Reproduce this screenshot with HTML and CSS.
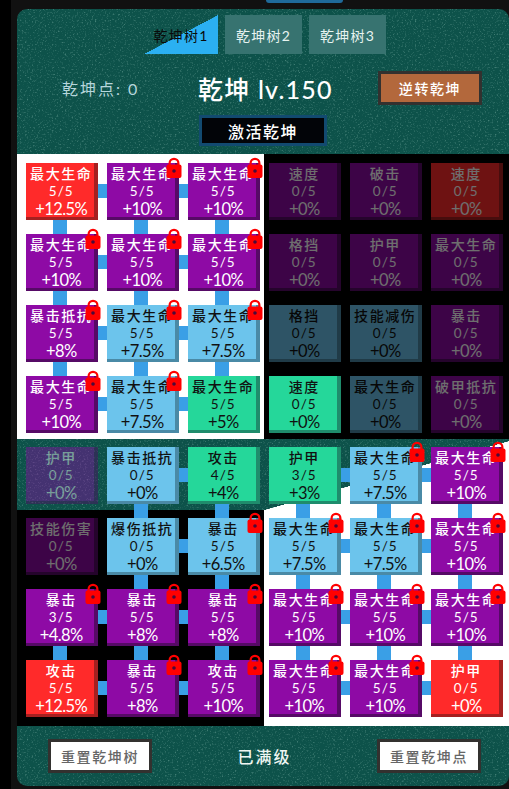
FILE: index.html
```html
<!DOCTYPE html>
<html lang="zh">
<head>
<meta charset="utf-8">
<title>乾坤</title>
<link rel="stylesheet" href="styles.css">
</head>
<body>
<svg class="defs" width="0" height="0" aria-hidden="true">
  <symbol id="lock" viewBox="0 0 16 21">
    <path d="M3.6 10V6.2a4.4 4.4 0 0 1 8.8 0V10" fill="none" stroke="#f00" stroke-width="2.2"/>
    <rect x="0.5" y="7.5" width="15" height="13.5" rx="2" fill="#f00"/>
    <circle cx="8" cy="14" r="1.8" fill="#4a0a3a"/>
  </symbol>
</svg>
<div class="frame">
  <div class="topbar"><span class="pill"></span></div>
  <main class="panel">
    <header class="head">
      <nav class="tabs">
        <span class="tab tab-on">乾坤树1</span>
        <span class="tab">乾坤树2</span>
        <span class="tab">乾坤树3</span>
      </nav>
      <div class="titlerow">
        <span class="points">乾坤点: 0</span>
        <h1 class="title">乾坤 lv.150</h1>
        <span class="btn btn-rust">逆转乾坤</span>
      </div>
      <div class="activate-row"><span class="activate">激活乾坤</span></div>
    </header>

    <section class="tree">
      <div class="cell red r d"><b>最大生命</b><i>5/5</i><em>+12.5%</em></div>
      <div class="cell purple r d"><b>最大生命</b><i>5/5</i><em>+10%</em><svg class="lock"><use href="#lock"/></svg></div>
      <div class="cell purple d"><b>最大生命</b><i>5/5</i><em>+10%</em><svg class="lock"><use href="#lock"/></svg></div>
      <div class="cell purple dim"><b>速度</b><i>0/5</i><em>+0%</em></div>
      <div class="cell purple dim"><b>破击</b><i>0/5</i><em>+0%</em></div>
      <div class="cell red dim"><b>速度</b><i>0/5</i><em>+0%</em></div>

      <div class="cell purple r d"><b>最大生命</b><i>5/5</i><em>+10%</em><svg class="lock"><use href="#lock"/></svg></div>
      <div class="cell purple r d"><b>最大生命</b><i>5/5</i><em>+10%</em><svg class="lock"><use href="#lock"/></svg></div>
      <div class="cell purple d"><b>最大生命</b><i>5/5</i><em>+10%</em><svg class="lock"><use href="#lock"/></svg></div>
      <div class="cell purple dim"><b>格挡</b><i>0/5</i><em>+0%</em></div>
      <div class="cell purple dim"><b>护甲</b><i>0/5</i><em>+0%</em></div>
      <div class="cell purple dim"><b>最大生命</b><i>0/5</i><em>+0%</em></div>

      <div class="cell purple r d"><b>暴击抵抗</b><i>5/5</i><em>+8%</em><svg class="lock"><use href="#lock"/></svg></div>
      <div class="cell blue r d"><b>最大生命</b><i>5/5</i><em>+7.5%</em><svg class="lock"><use href="#lock"/></svg></div>
      <div class="cell blue d"><b>最大生命</b><i>5/5</i><em>+7.5%</em><svg class="lock"><use href="#lock"/></svg></div>
      <div class="cell blue dim"><b>格挡</b><i>0/5</i><em>+0%</em></div>
      <div class="cell blue dim"><b>技能减伤</b><i>0/5</i><em>+0%</em></div>
      <div class="cell purple dim"><b>暴击</b><i>0/5</i><em>+0%</em></div>

      <div class="cell purple r"><b>最大生命</b><i>5/5</i><em>+10%</em><svg class="lock"><use href="#lock"/></svg></div>
      <div class="cell blue r"><b>最大生命</b><i>5/5</i><em>+7.5%</em><svg class="lock"><use href="#lock"/></svg></div>
      <div class="cell green"><b>最大生命</b><i>5/5</i><em>+5%</em></div>
      <div class="cell green"><b>速度</b><i>0/5</i><em>+0%</em></div>
      <div class="cell blue dim"><b>最大生命</b><i>0/5</i><em>+0%</em></div>
      <div class="cell purple dim"><b>破甲抵抗</b><i>0/5</i><em>+0%</em></div>

      <div class="cell purple dim"><b>护甲</b><i>0/5</i><em>+0%</em></div>
      <div class="cell blue r d"><b>暴击抵抗</b><i>0/5</i><em>+0%</em></div>
      <div class="cell green d"><b>攻击</b><i>4/5</i><em>+4%</em></div>
      <div class="cell green r d"><b>护甲</b><i>3/5</i><em>+3%</em></div>
      <div class="cell blue r d"><b>最大生命</b><i>5/5</i><em>+7.5%</em><svg class="lock"><use href="#lock"/></svg></div>
      <div class="cell purple d"><b>最大生命</b><i>5/5</i><em>+10%</em><svg class="lock"><use href="#lock"/></svg></div>

      <div class="cell purple dim"><b>技能伤害</b><i>0/5</i><em>+0%</em></div>
      <div class="cell blue r d"><b>爆伤抵抗</b><i>0/5</i><em>+0%</em></div>
      <div class="cell blue d"><b>暴击</b><i>5/5</i><em>+6.5%</em><svg class="lock"><use href="#lock"/></svg></div>
      <div class="cell blue r d"><b>最大生命</b><i>5/5</i><em>+7.5%</em><svg class="lock"><use href="#lock"/></svg></div>
      <div class="cell blue r d"><b>最大生命</b><i>5/5</i><em>+7.5%</em><svg class="lock"><use href="#lock"/></svg></div>
      <div class="cell purple d"><b>最大生命</b><i>5/5</i><em>+10%</em><svg class="lock"><use href="#lock"/></svg></div>

      <div class="cell purple r d"><b>暴击</b><i>3/5</i><em>+4.8%</em><svg class="lock"><use href="#lock"/></svg></div>
      <div class="cell purple r d"><b>暴击</b><i>5/5</i><em>+8%</em><svg class="lock"><use href="#lock"/></svg></div>
      <div class="cell purple d"><b>暴击</b><i>5/5</i><em>+8%</em><svg class="lock"><use href="#lock"/></svg></div>
      <div class="cell purple r d"><b>最大生命</b><i>5/5</i><em>+10%</em><svg class="lock"><use href="#lock"/></svg></div>
      <div class="cell purple r d"><b>最大生命</b><i>5/5</i><em>+10%</em><svg class="lock"><use href="#lock"/></svg></div>
      <div class="cell purple d"><b>最大生命</b><i>5/5</i><em>+10%</em><svg class="lock"><use href="#lock"/></svg></div>

      <div class="cell red r"><b>攻击</b><i>5/5</i><em>+12.5%</em></div>
      <div class="cell purple r"><b>暴击</b><i>5/5</i><em>+8%</em><svg class="lock"><use href="#lock"/></svg></div>
      <div class="cell purple"><b>攻击</b><i>5/5</i><em>+10%</em><svg class="lock"><use href="#lock"/></svg></div>
      <div class="cell purple r"><b>最大生命</b><i>5/5</i><em>+10%</em><svg class="lock"><use href="#lock"/></svg></div>
      <div class="cell purple r"><b>最大生命</b><i>5/5</i><em>+10%</em><svg class="lock"><use href="#lock"/></svg></div>
      <div class="cell red"><b>护甲</b><i>0/5</i><em>+0%</em></div>
    </section>

    <footer class="foot">
      <span class="btn btn-white">重置乾坤树</span>
      <span class="maxed">已满级</span>
      <span class="btn btn-white">重置乾坤点</span>
    </footer>
  </main>
</div>
</body>
</html>
```
FILE: styles.css
```css
* { box-sizing: border-box; }
html, body { margin: 0; height: 789px; overflow: hidden; background: #000; }
body { font-family: Lato, "Noto Sans CJK SC", sans-serif; }
.defs { display: block; height: 0; }

.frame {
  margin-left: 11px;
  padding-left: 6px;
  height: 789px;
  background: #111;
}
.topbar { height: 9px; padding-left: 249px; }
.pill {
  display: block;
  width: 77px;
  height: 3px;
  background: #1f6a9a;
  border-radius: 0 0 6px 6px;
}

.panel {
  height: 777px;
  border-radius: 10px;
  overflow: hidden;
  background-color: #0d524a;
  background-image: url("data:image/svg+xml,%3Csvg xmlns='http://www.w3.org/2000/svg' width='320' height='320'%3E%3Cfilter id='n' x='0' y='0' width='100%25' height='100%25'%3E%3CfeTurbulence type='fractalNoise' baseFrequency='.6' numOctaves='2' seed='7' stitchTiles='stitch'/%3E%3CfeColorMatrix values='0 0 0 0 .55 0 0 0 0 .85 0 0 0 0 .75 1 0 0 0 -.56'/%3E%3C/filter%3E%3Crect width='320' height='320' filter='url(%23n)'/%3E%3C/svg%3E");
}

.head { height: 145px; padding-top: 6px; }
.tabs { display: flex; gap: 7px; height: 39px; padding-left: 127px; }
.tab {
  width: 77px;
  display: flex;
  align-items: center;
  justify-content: center;
  background: #377370;
  color: #e8f4f0;
  font-size: 14px;
  letter-spacing: 1.2px;
}
.tab-on {
  width: 74px;
  color: #0a0a0a;
  background: linear-gradient(to bottom right, transparent 50%, #2bb0f2 50.3%);
}

.titlerow {
  display: flex;
  align-items: center;
  height: 34px;
  margin-top: 17px;
}
.points {
  width: 181px;
  padding-left: 45px;
  color: #b6d6dc;
  font-size: 16px;
  letter-spacing: 2px;
  white-space: nowrap;
}
.title {
  width: 180px;
  margin: 0;
  color: #fff;
  font-size: 25px;
  font-weight: 500;
  letter-spacing: 1.2px;
  white-space: nowrap;
}
.btn {
  display: flex;
  align-items: center;
  justify-content: center;
  width: 104px;
  height: 34px;
  border: 3px solid #33312f;
  font-size: 14px;
  font-weight: 500;
  letter-spacing: 1.6px;
}
.btn-rust { background: #b3683c; color: #fff; }
.btn-white { background: #fff; color: #666; }

.activate-row { display: flex; justify-content: center; margin-top: 10px; }
.activate {
  display: flex;
  align-items: center;
  justify-content: center;
  width: 128px;
  height: 31px;
  background: #020408;
  border: 3px solid #124a70;
  color: #fff;
  font-size: 16px;
  font-weight: 500;
  letter-spacing: 1.5px;
}

.tree {
  display: grid;
  grid-template-columns: repeat(6, 71.5px);
  grid-auto-rows: 57px;
  column-gap: 9.5px;
  row-gap: 14px;
  height: 572px;
  padding: 9px 0 9px 9px;
  background:
    linear-gradient(#fff, #fff) 0 0 / 247px 285px no-repeat,
    linear-gradient(#000, #000) 247px 0 / 245px 285px no-repeat,
    linear-gradient(#000, #000) 0 356px / 247px 216px no-repeat,
    linear-gradient(#fff, #fff) 247px 356px / 245px 216px no-repeat,
    linear-gradient(to bottom right, transparent 50%, #fff 50.2%) 247px 287px / 245px 69px no-repeat;
}

.cell {
  position: relative;
  display: flex;
  flex-direction: column;
  align-items: center;
  border-style: solid;
  border-width: 0 4px 3px 0;
  padding-left: 3px;
  color: #fff;
  white-space: nowrap;
}
.cell b {
  height: 19px;
  margin-top: 1px;
  font-size: 14px;
  line-height: 19px;
  font-weight: 500;
  letter-spacing: 1.6px;
}
.cell i {
  height: 16px;
  font-size: 13.5px;
  line-height: 16px;
  font-style: normal;
  letter-spacing: 1px;
}
.cell em {
  height: 19px;
  margin-top: 1px;
  font-size: 16.5px;
  line-height: 19px;
  font-style: normal;
  letter-spacing: -.6px;
}
.red { background: #ff2a2a; border-color: #ff2a2a #a52020 #a52020 #ff2a2a; }
.purple { background: #8e0aa5; border-color: #8e0aa5 #560a66 #560a66 #8e0aa5; }
.blue { background: #6cc4ec; border-color: #6cc4ec #4a8aa6 #4a8aa6 #6cc4ec; color: #111; }
.green { background: #25d79a; border-color: #25d79a #1f8c6c #1f8c6c #25d79a; color: #111; }
.dim { opacity: .43; }

.r::after, .d::before {
  content: "";
  position: absolute;
  background: #3a9fe6;
}
.r::after { left: calc(100% + 4px); top: 21px; width: 10px; height: 14px; }
.d::before { left: 50%; margin-left: -7px; top: calc(100% + 3px); width: 14px; height: 14px; }

.lock {
  position: absolute;
  top: -6px;
  right: -7px;
  width: 16px;
  height: 21px;
  z-index: 2;
}

.foot {
  display: flex;
  align-items: center;
  justify-content: space-between;
  height: 60px;
  padding: 0 28px 0 31px;
}
.maxed { color: #f0f6f2; font-size: 16px; font-weight: 500; letter-spacing: 2px; }
```
